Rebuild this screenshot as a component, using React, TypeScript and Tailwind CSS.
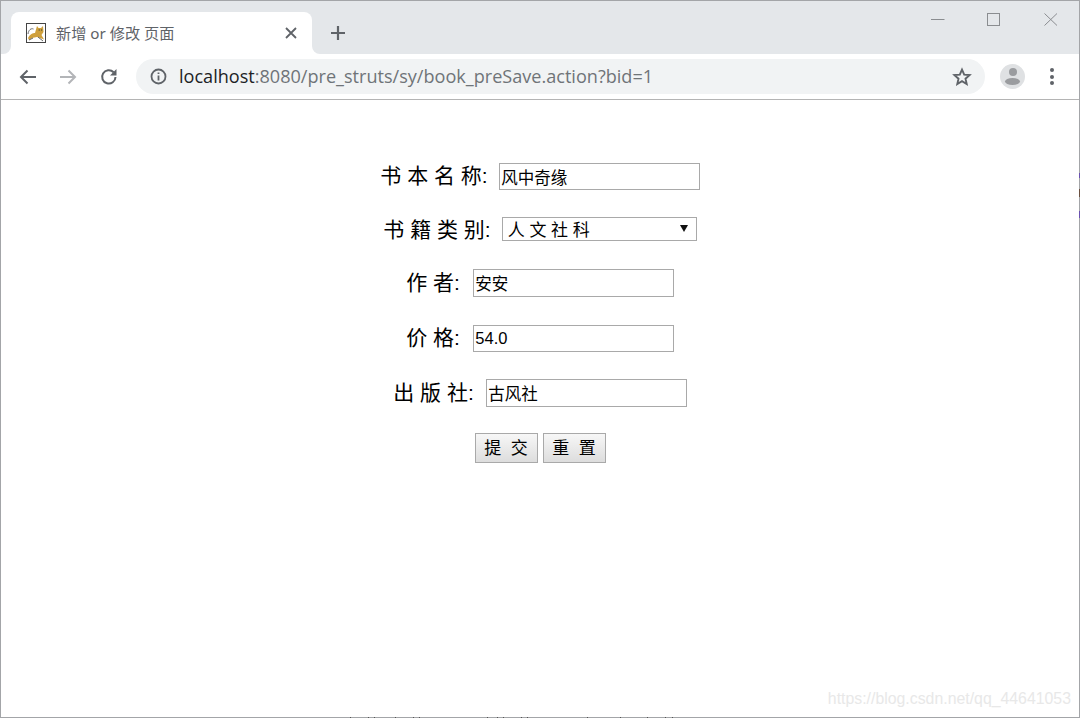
const cjk = '"Liberation Sans", "Noto Sans CJK SC", sans-serif';

function Favicon() {
  return (
    <svg width="20" height="20" viewBox="0 0 20 20" className="shrink-0">
      <rect x="0.5" y="0.5" width="19" height="19" fill="#fff" stroke="#444" />
      <path d="M2 15 C4 11 7 10 9 10 L11 3 L12.5 5 L15 5 L17 3 L17.5 9 L15.5 12 L18 16.5 L14 15 L11 14 L6 15 L3 17 Z" fill="#cfa03c" />
      <path d="M2 11 C2.5 7 5 5 7.5 6 M3 17 L7 15 M12 14 L17 18" fill="none" stroke="#666" strokeWidth="1" />
      <circle cx="13.2" cy="7" r="0.7" fill="#553" />
      <circle cx="15.6" cy="7" r="0.7" fill="#553" />
    </svg>
  );
}

function Field({ label, value, top, h, gap }: { label: string; value: string; top: string; h: string; gap: string }) {
  return (
    <div className={`flex items-center ${gap} ${top}`}>
      <span className="text-[21px] leading-[25px] pb-[2px] text-black whitespace-pre">{label}</span>
      <input
        readOnly
        value={value}
        className={`w-[201px] ${h} border border-[#a9a9a9] bg-white px-[1.5px] text-[16.5px] text-black outline-none`}
        style={{ fontFamily: cjk }}
      />
    </div>
  );
}

const bottomTicks = [350, 368, 374, 395, 413, 419, 487, 497, 503, 521, 527, 587, 620, 647, 665, 672];

export default function App() {
  return (
    <div
      className="relative w-[1080px] h-[718px] box-border border border-[#a3a5a8] bg-white flex flex-col"
      style={{ fontFamily: cjk }}
    >
      {/* tab strip */}
      <div className="h-[53px] shrink-0 bg-[#e4e7ea] flex items-end pl-[10px] relative">
        <div className="relative w-[301px] h-[42px] bg-white rounded-t-[8px] flex items-center pl-[15px] pr-[15px]">
          <span className="absolute -left-[8px] bottom-0 w-[8px] h-[8px] bg-white">
            <span className="block w-full h-full bg-[#e4e7ea] rounded-br-[8px]" />
          </span>
          <span className="absolute -right-[8px] bottom-0 w-[8px] h-[8px] bg-white">
            <span className="block w-full h-full bg-[#e4e7ea] rounded-bl-[8px]" />
          </span>
          <Favicon />
          <span
            className="ml-[10px] text-[15.2px] text-[#5f6368] whitespace-pre flex-1"
            style={{ fontFamily: '"Noto Sans", "Noto Sans CJK SC", sans-serif' }}
          >
            新增 or 修改 页面
          </span>
          <svg width="12" height="12" viewBox="0 0 12 12" className="shrink-0">
            <path d="M1 1 L11 11 M11 1 L1 11" stroke="#5f6368" strokeWidth="1.8" />
          </svg>
        </div>
        <svg width="16" height="16" viewBox="0 0 16 16" className="ml-[18px] mb-[13px]">
          <path d="M8 1 V15 M1 8 H15" stroke="#5f6368" strokeWidth="2.2" />
        </svg>
        <div className="absolute right-[21px] top-[12px] flex items-start">
          <svg width="14" height="13" viewBox="0 0 14 13"><path d="M0 6.5 H13.5" stroke="#8a8d90" strokeWidth="1" /></svg>
          <svg width="14" height="13" viewBox="0 0 14 13" className="ml-[42px]"><rect x="0.5" y="0.5" width="12" height="12" fill="none" stroke="#8a8d90" /></svg>
          <svg width="14" height="13" viewBox="0 0 14 13" className="ml-[43px]"><path d="M0.5 0.5 L13 12.5 M13 0.5 L0.5 12.5" stroke="#8a8d90" strokeWidth="1" fill="none" /></svg>
        </div>
      </div>

      {/* toolbar */}
      <div className="h-[46px] shrink-0 bg-white border-b border-[#b4b4b4] flex items-start relative">
        <div className="w-[135px] h-[45px] flex items-center shrink-0">
          <svg width="18" height="16" viewBox="0 0 18 16" className="ml-[18px]">
            <path d="M17 8 H2 M8.5 1.5 L2 8 L8.5 14.5" fill="none" stroke="#5f6368" strokeWidth="2" />
          </svg>
          <svg width="18" height="16" viewBox="0 0 18 16" className="ml-[22px]">
            <path d="M1 8 H16 M9.5 1.5 L16 8 L9.5 14.5" fill="none" stroke="#b3b5b8" strokeWidth="2" />
          </svg>
          <svg width="18" height="18" viewBox="0 0 18 18" className="ml-[23px]">
            <path d="M15.5 9 A6.7 6.7 0 1 1 13.6 4.2" fill="none" stroke="#5f6368" strokeWidth="2" />
            <path d="M16.5 1 V7.6 H10 Z" fill="#5f6368" />
          </svg>
        </div>
        <div className="mt-[5px] w-[849px] h-[35px] rounded-full bg-[#f1f3f4] flex items-center pl-[14px] pr-[13px]">
          <svg width="17" height="17" viewBox="0 0 17 17" className="shrink-0">
            <circle cx="8.5" cy="8.5" r="7" fill="none" stroke="#5f6368" strokeWidth="1.8" />
            <path d="M8.5 7.5 V12.5 M8.5 4.5 V6" stroke="#5f6368" strokeWidth="1.8" />
          </svg>
          <span
            className="ml-[12px] flex-1 text-[18.08px] text-[#6f7478] whitespace-pre"
            style={{ fontFamily: '"Open Sans", "Noto Sans", sans-serif' }}
          >
            <span className="text-[#202124]">localhost</span>:8080/pre_struts/sy/book_preSave.action?bid=1
          </span>
          <svg width="20" height="20" viewBox="0 0 20 20" className="shrink-0">
            <path d="M10 2.6 L12.2 7.6 L17.6 8.1 L13.5 11.7 L14.7 17 L10 14.2 L5.3 17 L6.5 11.7 L2.4 8.1 L7.8 7.6 Z" fill="none" stroke="#5f6368" strokeWidth="1.9" />
          </svg>
        </div>
        <div className="ml-[15px] mt-[10px] w-[25px] h-[25px] rounded-full bg-[#dfe1e3] flex flex-col items-center justify-center overflow-hidden shrink-0">
          <span className="block w-[8px] h-[8px] rounded-full bg-[#9a9c9f]" />
          <span className="block mt-[2px] w-[15px] h-[7px] rounded-[50%] bg-[#9a9c9f]" />
        </div>
        <div className="ml-[25px] mt-[14px] flex flex-col gap-[2.5px] shrink-0">
          <span className="block w-[4px] h-[4px] rounded-full bg-[#5f6368]" />
          <span className="block w-[4px] h-[4px] rounded-full bg-[#5f6368]" />
          <span className="block w-[4px] h-[4px] rounded-full bg-[#5f6368]" />
        </div>
      </div>

      {/* page */}
      <form className="flex-1 flex flex-col items-center text-black">
        <Field top="mt-[63px]" gap="gap-[11px]" h="h-[27px]" label="书 本 名 称:" value="风中奇缘" />
        <div className="mt-[27px] flex items-center gap-[11px] h-[24px]">
          <span className="text-[21px] leading-[27px] whitespace-pre">书 籍 类 别:</span>
          <div className="relative w-[195px] h-[24px]">
            <select
              className="w-full h-full appearance-none border border-[#a9a9a9] bg-white pl-[5px] pt-[3px] text-[17px] leading-[20px] text-black outline-none rounded-none"
              style={{ fontFamily: cjk }}
              defaultValue="a"
            >
              <option value="a">人 文 社 科</option>
            </select>
            <svg width="8" height="7" viewBox="0 0 8 7" className="absolute right-[9px] top-[8px] pointer-events-none">
              <path d="M0 0 H8 L4 7 Z" fill="#111" />
            </svg>
          </div>
        </div>
        <Field top="mt-[28px]" gap="gap-[13px]" h="h-[28px]" label="作 者:" value="安安" />
        <Field top="mt-[28px]" gap="gap-[13px]" h="h-[27px]" label="价 格:" value="54.0" />
        <Field top="mt-[27px]" gap="gap-[12px]" h="h-[28px]" label="出 版 社:" value="古风社" />
        <div className="mt-[26px] flex gap-[5px]">
          {["提  交", "重  置"].map((t) => (
            <button
              key={t}
              type="button"
              className="w-[63px] h-[30px] pt-[1px] border border-[#a9a9a9] bg-gradient-to-b from-[#f7f7f7] to-[#dddddd] text-[17px] text-black whitespace-pre"
              style={{ fontFamily: cjk }}
            >
              {t}
            </button>
          ))}
        </div>
      </form>

      {/* watermark */}
      <span className="absolute right-[8px] bottom-[8px] text-[15.85px] leading-[20px] text-[#e8e8e8] whitespace-pre">
        https://blog.csdn.net/qq_44641053
      </span>

      {/* tops of cut-off page text along the window edge */}
      <svg width="1080" height="1" viewBox="0 0 1080 1" className="absolute -left-px -bottom-px pointer-events-none">
        {bottomTicks.map((x) => (
          <rect key={x} x={x} y="0" width="1" height="1" fill="#555" />
        ))}
      </svg>
      <svg width="1" height="60" viewBox="0 0 1 60" className="absolute -right-px top-[171px] pointer-events-none">
        <rect x="0" y="1" width="1" height="5" fill="#6a50b0" />
        <rect x="0" y="17" width="1" height="8" fill="#6a5040" />
        <rect x="0" y="39" width="1" height="7" fill="#6a50b0" />
      </svg>
    </div>
  );
}
